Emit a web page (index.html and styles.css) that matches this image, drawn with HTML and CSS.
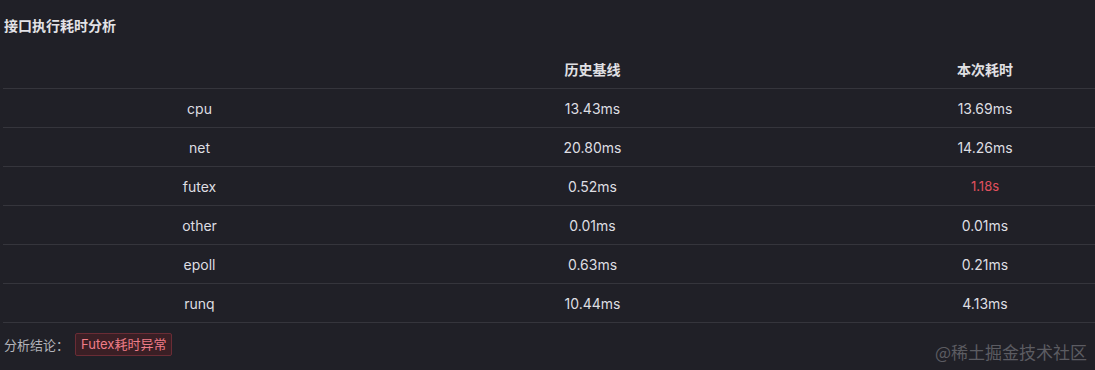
FILE: index.html
```html
<!DOCTYPE html>
<html>
<head>
<meta charset="utf-8">
<link rel="stylesheet" href="styles.css">
</head>
<body>
<div class="page">
  <div class="title">接口执行耗时分析</div>
  <table class="grid">
    <colgroup>
      <col class="c1"><col class="c2"><col class="c3">
    </colgroup>
    <thead>
      <tr><th></th><th>历史基线</th><th class="last">本次耗时</th></tr>
    </thead>
    <tbody>
      <tr><td>cpu</td><td>13.43ms</td><td class="last">13.69ms</td></tr>
      <tr><td>net</td><td>20.80ms</td><td class="last">14.26ms</td></tr>
      <tr><td>futex</td><td>0.52ms</td><td class="last bad">1.18s</td></tr>
      <tr><td>other</td><td>0.01ms</td><td class="last">0.01ms</td></tr>
      <tr><td>epoll</td><td>0.63ms</td><td class="last">0.21ms</td></tr>
      <tr><td>runq</td><td>10.44ms</td><td class="last">4.13ms</td></tr>
    </tbody>
  </table>
  <div class="footer">
    <span class="label">分析结论：</span>
    <span class="tag">Futex耗时异常</span>
  </div>
  <div class="watermark">@稀土掘金技术社区</div>
</div>
</body>
</html>
```
FILE: styles.css
```css
html, body {
  margin: 0;
  padding: 0;
  background: #202027;
  overflow: hidden;
  width: 1095px;
  height: 370px;
}
.page {
  position: relative;
  padding: 16px 0 0 3px;
  font-family: Inter, "Noto Sans CJK SC", sans-serif;
  color: #dcdce0;
}
.title {
  font-size: 14px;
  font-weight: 700;
  line-height: 20px;
  padding-left: 1px;
  color: #e2e2e6;
  height: 20px;
  margin-bottom: 14px;
}
.grid {
  width: 1092px;
  border-collapse: collapse;
  table-layout: fixed;
  font-size: 14px;
}
.grid .c1, .grid .c2 { width: 393px; }
.grid .c3 { width: 306px; }
.grid th, .grid td {
  text-align: center;
  height: 38px;
  padding: 0;
  border-bottom: 1px solid #35353c;
  font-weight: 400;
}
.grid th.last, .grid td.last {
  padding-left: 86px;
}
.grid th {
  font-weight: 700;
  font-size: 14px;
  color: #e0e0e4;
}
.grid td {
  color: #dedee2;
}
.grid td.bad {
  color: #e0505e;
  font-size: 13px;
}
.footer {
  display: flex;
  align-items: center;
  gap: 6px;
  margin-top: 10px;
  padding-left: 1px;
}
.label {
  font-size: 13px;
  color: #b4b4ba;
}
.tag {
  font-size: 13px;
  line-height: 21px;
  padding: 0 5px;
  border: 1px solid #6a2c35;
  background: #3a1f25;
  color: #ef7d88;
  border-radius: 2px;
}
.watermark {
  position: absolute;
  right: 8px;
  top: 340px;
  font-family: "Noto Sans CJK SC", sans-serif;
  font-size: 17px;
  line-height: 24px;
  color: #5c5c62;
}
```
